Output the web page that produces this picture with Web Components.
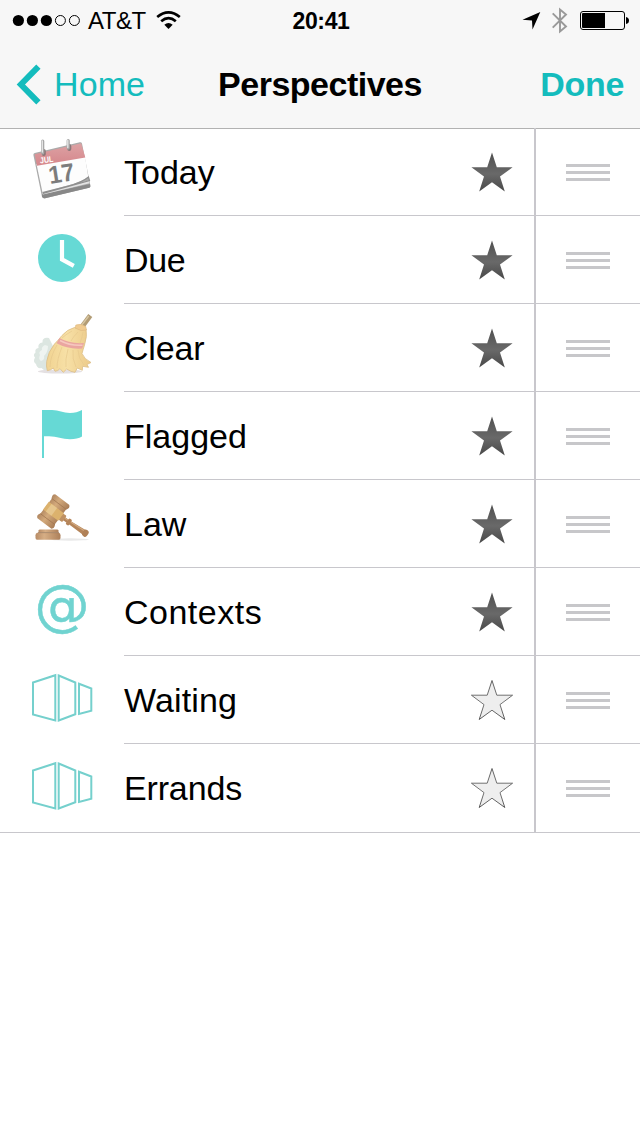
<!DOCTYPE html>
<html lang="en">
<head>
<meta charset="utf-8">
<meta name="viewport" content="width=640">
<title>Perspectives</title>
<style>
  body {
    margin: 0;
    background: white;
    color: black;
    font-family: "Liberation Sans", Arial, sans-serif;
    --tint: #14bcbd;
    --line: #c8c7cc;
  }
</style>
</head>
<body>
<app-header>
  <status-bar slot="status" carrier="AT&amp;T" time="20:41" signal="3"></status-bar>
  <nav-bar>
    <span slot="back">Home</span>
    <span slot="title">Perspectives</span>
    <span slot="action">Done</span>
  </nav-bar>
</app-header>
<perspective-list>
  <perspective-row icon="calendar" starred>Today</perspective-row>
  <perspective-row icon="clock" starred style="letter-spacing: -.3px">Due</perspective-row>
  <perspective-row icon="broom" starred style="letter-spacing: -.2px">Clear</perspective-row>
  <perspective-row icon="flag" starred>Flagged</perspective-row>
  <perspective-row icon="gavel" starred>Law</perspective-row>
  <perspective-row icon="at" starred style="letter-spacing: .5px">Contexts</perspective-row>
  <perspective-row icon="panels" style="letter-spacing: .15px">Waiting</perspective-row>
  <perspective-row icon="panels" style="letter-spacing: -.15px">Errands</perspective-row>
</perspective-list>

<script>
// All icons share the 124x88 box of the row's left cell
const icons = {
  calendar: `
    <defs>
      <linearGradient id="red" x1="0" y1="0" x2="0" y2="1">
        <stop offset="0" stop-color="#dda2a4"/><stop offset="1" stop-color="#d5868b"/>
      </linearGradient>
    </defs>
    <path fill="#aaa" d="M33.400 27q-.2-1.600 1.300-2L79.800 14.300q1.600-.4 2.200 1.100L90.400 57.500q.4 1.800-1.400 2.200L45.200 70.300q-2.600.6-3.300-1.700z"/>
    <path fill="#888" d="M42 66.500L90 56l.3 2.600q0 .9-1 1.200L45 70.200q-2.300.5-3-1.700z"/>
    <path fill="#e3e3e3" d="M42.200 64L89 52.500l.5 2.800L43 66.600z"/>
    <path fill="#fdfdfd" d="M36.500 36L85 28.500 88.300 49Q80 55 66 58L42.500 64.400z"/>
    <path fill="none" stroke="#8f8f8f" stroke-width="1.200" d="M42.500 64.500L68 58Q82 54.500 88.500 49l1 3.500L43 65.500"/>
    <path fill="url(#red)" d="M34.600 26.200L81.200 15.300 85.300 29.500 37 37.800z"/>
    <g fill="none" stroke-linecap="round">
      <path stroke="#8b7778" stroke-width="4" d="M43.800 23v3M69.300 18v3"/>
      <path stroke="#a8a8a8" stroke-width="3.200" d="M42.700 13v12M68.200 12.500v7.500"/>
      <path stroke="#e8e8e8" stroke-width="1.300" d="M42.300 13v11M67.800 12.500v7"/>
    </g>
    <text transform="translate(40.200 35.400) rotate(-7)" font-size="8.500" font-weight="bold" textLength="13.500" lengthAdjust="spacingAndGlyphs" fill="#fff">JUL</text>
    <text transform="translate(50 56) rotate(-9)" font-size="25" font-weight="bold" textLength="26" lengthAdjust="spacingAndGlyphs" fill="#7c7c7c">17</text>`,
  clock: `
    <circle cx="62" cy="42" r="24" fill="#66d9d5"/>
    <path fill="none" stroke="#fff" stroke-width="4.200" d="M62 24v19.400l11.800 6.400"/>`,
  broom: `
    <defs>
      <linearGradient id="straw" x1="0" y1="0" x2="1" y2="0">
        <stop offset="0" stop-color="#f1d391"/><stop offset=".45" stop-color="#f7e0a6"/><stop offset="1" stop-color="#ecca88"/>
      </linearGradient>
    </defs>
    <ellipse cx="60" cy="67.500" rx="22" ry="2" fill="#e4e0e2"/>
    <path fill="#dce6e1" d="M49 34q-7-1-6.500 4.500-5 .5-4 5.500-4 .5-3 4.500-3 2.500-.5 5-2.500 4 1 6.500 1 5 5.500 4 3 3.500 6.500 1.500L54 44z"/>
    <path fill="#eff4f1" d="M45 41q-4 2-3 5-4 2-2 5-2 4 1 6 4-1 3-5 4-4 4-10z"/>
    <path stroke="#b29c75" stroke-width="5" d="M80 25.500L90.300 11.500"/>
    <path stroke="#d8c7a2" stroke-width="1.300" d="M79.500 24L88.700 12"/>
    <path fill="url(#straw)" stroke="#dcbe86" stroke-width=".8" d="M74.500 23.500Q67 25.500 62 31.500Q58 36.500 54.500 40Q48 48 46.700 57.300Q46 62 47.300 66.700Q51 66 53.300 64L55 67.300Q58 67 60 64.700L63.300 68.300 66.700 65Q71 68 75 68.300L77.300 64 82.300 66.300 82.600 62.300 88.500 63.300 87 60.500 91 58.500Q84 55 82 49.500 83 46 84.500 41 87.500 32 86 25z"/>
    <path fill="#f0cb90" stroke="#d9b37a" stroke-width=".5" d="M75 24l.8-3q5-1.800 10 1.500l.7 3.500q-5 2-11.500-2z"/>
    <path fill="none" stroke="#e6c98d" stroke-width=".7" d="M57 41q-7 12-7 22M62 43q-5 12-5 21M68 45q-3 11-2 18M73 46q-1 9 3 17M78 46q0 8 6 15M72 27q-7 4-10 7M78 28q-5 5-7 9M83 28q-1 6-3 11"/>
    <path fill="#eaa5a0" d="M59.500 34q10 6 24.500 5l-1.800 5.500Q68 45.500 56.500 39.300z"/>
    <path fill="none" stroke="#f6c8bf" stroke-width="1.500" d="M60 36.500q10 5.500 22.500 4.700"/>`,
  flag: `
    <path fill="#66d9d5" d="M42 18h10c7 0 11 3 18 3 5 0 8-1 12-3v26.600c-3 1.800-7 2.600-12 2.600-8 0-13-3-21-3h-5V66h-2z"/>`,
  gavel: `
    <defs>
      <linearGradient id="wood" x1="0" y1="0" x2="1" y2="0">
        <stop offset="0" stop-color="#b08660"/><stop offset=".4" stop-color="#d3aa7c"/><stop offset="1" stop-color="#a87c56"/>
      </linearGradient>
      <linearGradient id="block" x1="0" y1="0" x2="1" y2="0">
        <stop offset="0" stop-color="#b88c66"/><stop offset=".35" stop-color="#d6ae85"/><stop offset="1" stop-color="#ad805a"/>
      </linearGradient>
    </defs>
    <ellipse cx="70" cy="59.500" rx="19" ry="1.200" fill="#e9e9e9"/>
    <path fill="url(#block)" d="M38.500 50.500q.3-1 1.500-1h17q1.200 0 1.500 1v2h-20z"/>
    <path fill="url(#block)" d="M37 52.700h22q1.500.6 1.500 2.500v2.500q0 2-1.500 2H37q-1.500 0-1.500-2v-2.500q0-1.900 1.500-2.500z"/>
    <path stroke="#94704f" stroke-width=".7" d="M38 52.600h21"/>
    <g transform="translate(53.300 31.500) rotate(34)">
      <path fill="#b5855a" d="M10-1.800h10L38-2.800v5.600L20 1.800H10z"/>
      <path stroke="#d2a97f" stroke-width="1.200" d="M13-.8l23-.6"/>
      <rect x="9" y="-3.800" width="4.500" height="7.600" rx="1" fill="#be9164"/>
      <rect x="17" y="-3.400" width="3.500" height="6.800" rx="1" fill="#b5855a"/>
      <rect x="36" y="-3.600" width="5.500" height="7.200" rx="2.300" fill="#b08056"/>
    </g>
    <g transform="translate(53.300 31.500) rotate(37)">
      <path fill="url(#wood)" d="M-8.500-15h17q2.500 1.500 1.500 4L9-9V9l1 2q1 2.500-1.500 4h-17q-2.500-1.500-1.500-4l1-2V-9l-1-2q-1-2.500 1.500-4z"/>
      <path fill="#dcb26d" d="M-9.400-5H9.400v9.500H-9.400z"/>
      <path fill="#e6c68e" d="M-6-5H1v9.500h-7z"/>
      <path stroke="#a07551" stroke-width=".7" d="M-9-9.500H9M-9 9.500H9"/>
    </g>`,
  at: `
    <text x="62" y="56.300" text-anchor="middle" font-family="DejaVu Sans" font-size="55" fill="#70d3d0" stroke="#70d3d0" stroke-width=".5">@</text>`,
  panels: `
    <path fill="none" stroke="#75d0cd" stroke-width="2" d="M33 26.500l22.300-7.300v45.300L33 58.500zM58.700 19.500l16.600 7v31.700l-16.600 6.300zM79 27.700l12.300 4.800v22.300L79 58z"/>`
}

class AppHeader extends HTMLElement {
  connectedCallback() {
    this.attachShadow({ mode: 'open' }).innerHTML = `
      <style>
        :host {
          display: flex;
          flex-direction: column;
          box-sizing: border-box;
          height: 129px;
          background: #f7f7f7;
          border-bottom: 1px solid #b2b2b2;
        }
      </style>
      <slot name="status"></slot>
      <slot></slot>`
  }
}

class StatusBar extends HTMLElement {
  connectedCallback() {
    const signal = Number(this.getAttribute('signal'))
    const dots = [18.4, 32.4, 46.4, 60.4, 74.4].map((x, i) =>
      `<circle cx="${x}" cy="20.500" r="${i < signal ? 5.6 : 5}" ${i < signal ? '' : 'fill="none" stroke="#000"'}/>`
    ).join('')

    this.attachShadow({ mode: 'open' }).innerHTML = `
      <style>
        :host {
          display: grid;
          grid-template-columns: 1fr auto 1fr;
          align-items: start;
          height: 40px;
          font-size: 24px;
          line-height: 42px;
        }
        svg { display: block; }
        .left, .right { display: flex; align-items: flex-start; }
        .right { justify-content: flex-end; }
        .carrier { width: 65px; letter-spacing: -.5px; margin-left: 1px; }
        .time { font-weight: bold; font-size: 23px; letter-spacing: -.35px; padding-left: 2px; }
      </style>
      <div class="left">
        <svg width="87" height="40">${dots}</svg>
        <span class="carrier">${this.getAttribute('carrier').replace('&', '&amp;')}</span>
        <svg width="32" height="40" viewBox="153 0 32 40">
          <path fill="none" stroke="#000" stroke-width="2.700" d="M157.200 17q11.300-9.200 22.600 0M161.200 21.200q7.300-6 14.600 0"/>
          <path d="M164.300 24.700q4.200-3.200 8.400 0l-4.200 4.200z"/>
        </svg>
      </div>
      <span class="time">${this.getAttribute('time')}</span>
      <div class="right">
        <svg width="120" height="40" viewBox="520 0 120 40">
          <path d="M540.300 12l-7.800 17.600-.5-9.100-9.500-.8z"/>
          <path fill="none" stroke="#999" stroke-width="1.900" d="M552.700 13.300l13.300 13.200-6 5V9.500l6 5-13.300 13.200"/>
          <rect x="580.500" y="11.500" width="44" height="18" rx="2.500" fill="none" stroke="#000"/>
          <path d="M582 14q0-1 1-1h22v15h-22q-1 0-1-1zM626 17q3 .5 3 3.500t-3 3.500z"/>
        </svg>
      </div>`
  }
}

class NavBar extends HTMLElement {
  connectedCallback() {
    this.attachShadow({ mode: 'open' }).innerHTML = `
      <style>
        :host {
          display: grid;
          grid-template-columns: 1fr auto 1fr;
          align-items: center;
          height: 88px;
          padding: 0 16px;
          font-size: 34px;
          line-height: 88px;
        }
        .back, .action { color: var(--tint); }
        .back { display: flex; align-items: center; letter-spacing: .1px; }
        .back svg { margin-right: 13px; }
        .title { font-weight: bold; letter-spacing: -.5px; }
        .action { font-weight: bold; text-align: right; letter-spacing: -.3px; }
      </style>
      <div class="back">
        <svg width="25" height="41">
          <path fill="none" stroke="currentColor" stroke-width="6" d="M22.400 2.700L4.900 20.500l17.500 17.800"/>
        </svg>
        <slot name="back"></slot>
      </div>
      <div class="title"><slot name="title"></slot></div>
      <div class="action"><slot name="action"></slot></div>`
  }
}

class PerspectiveList extends HTMLElement {
  connectedCallback() {
    // pulled up so the column line meets the header's border
    this.attachShadow({ mode: 'open' }).innerHTML = `
      <style>
        :host {
          display: block;
          position: relative;
          margin-top: -1px;
          border-bottom: 1px solid var(--line);
        }
        ::slotted(:last-child) { --separator: transparent; }
      </style>
      <slot></slot>`
  }
}

class PerspectiveRow extends HTMLElement {
  connectedCallback() {
    this.attachShadow({ mode: 'open' }).innerHTML = `
      <style>
        :host {
          display: flex;
          height: 88px;
          font-size: 34px;
          line-height: 88px;
        }
        .content {
          flex: 1;
          display: flex;
          box-sizing: border-box;
          height: 88px;
          border-bottom: 1px solid var(--separator, var(--line));
        }
        .label { flex: 1; }
      </style>
      <row-icon name="${this.getAttribute('icon')}"></row-icon>
      <div class="content">
        <span class="label"><slot></slot></span>
        <star-toggle ${this.hasAttribute('starred') ? 'on' : ''}></star-toggle>
        <drag-handle></drag-handle>
      </div>`
  }
}

class RowIcon extends HTMLElement {
  connectedCallback() {
    this.attachShadow({ mode: 'open' }).innerHTML = `
      <style>
        :host { display: block; width: 124px; height: 88px; letter-spacing: 0; }
        svg { display: block; overflow: visible; }
      </style>
      <svg width="124" height="88">${icons[this.getAttribute('name')]}</svg>`
  }
}

class StarToggle extends HTMLElement {
  connectedCallback() {
    const look = this.hasAttribute('on')
      ? 'fill="url(#shade)"'
      : 'fill="#eee" stroke="url(#shade)" stroke-width=".9"'

    this.attachShadow({ mode: 'open' }).innerHTML = `
      <style>
        :host { display: block; width: 84px; height: 87px; }
        svg { display: block; }
      </style>
      <svg width="84" height="87" viewBox="450 0 84 87">
        <defs>
          <linearGradient id="shade" x1="0" y1="0" x2="0" y2="1">
            <stop offset="0" stop-color="#505050"/>
            <stop offset=".55" stop-color="#696969"/>
            <stop offset="1" stop-color="#484848"/>
          </linearGradient>
        </defs>
        <path ${look} d="M492 24.500l4.800 14.700h15.800l-12.600 9.400 4.800 14.900-12.800-9.300-12.800 9.300 4.800-14.900-12.600-9.400h15.800z"/>
      </svg>`
  }
}

class DragHandle extends HTMLElement {
  connectedCallback() {
    this.attachShadow({ mode: 'open' }).innerHTML = `
      <style>
        :host {
          display: flex;
          flex-direction: column;
          align-items: center;
          gap: 4px;
          box-sizing: border-box;
          width: 106px;
          height: 88px;
          padding: 36px 0 0;
          border-left: 2px solid var(--line);
        }
        i { width: 44px; height: 3px; background: #c7c7ca; }
      </style>
      <i></i><i></i><i></i>`
  }
}

customElements.define('app-header', AppHeader)
customElements.define('status-bar', StatusBar)
customElements.define('nav-bar', NavBar)
customElements.define('perspective-list', PerspectiveList)
customElements.define('perspective-row', PerspectiveRow)
customElements.define('row-icon', RowIcon)
customElements.define('star-toggle', StarToggle)
customElements.define('drag-handle', DragHandle)
</script>
</body>
</html>
